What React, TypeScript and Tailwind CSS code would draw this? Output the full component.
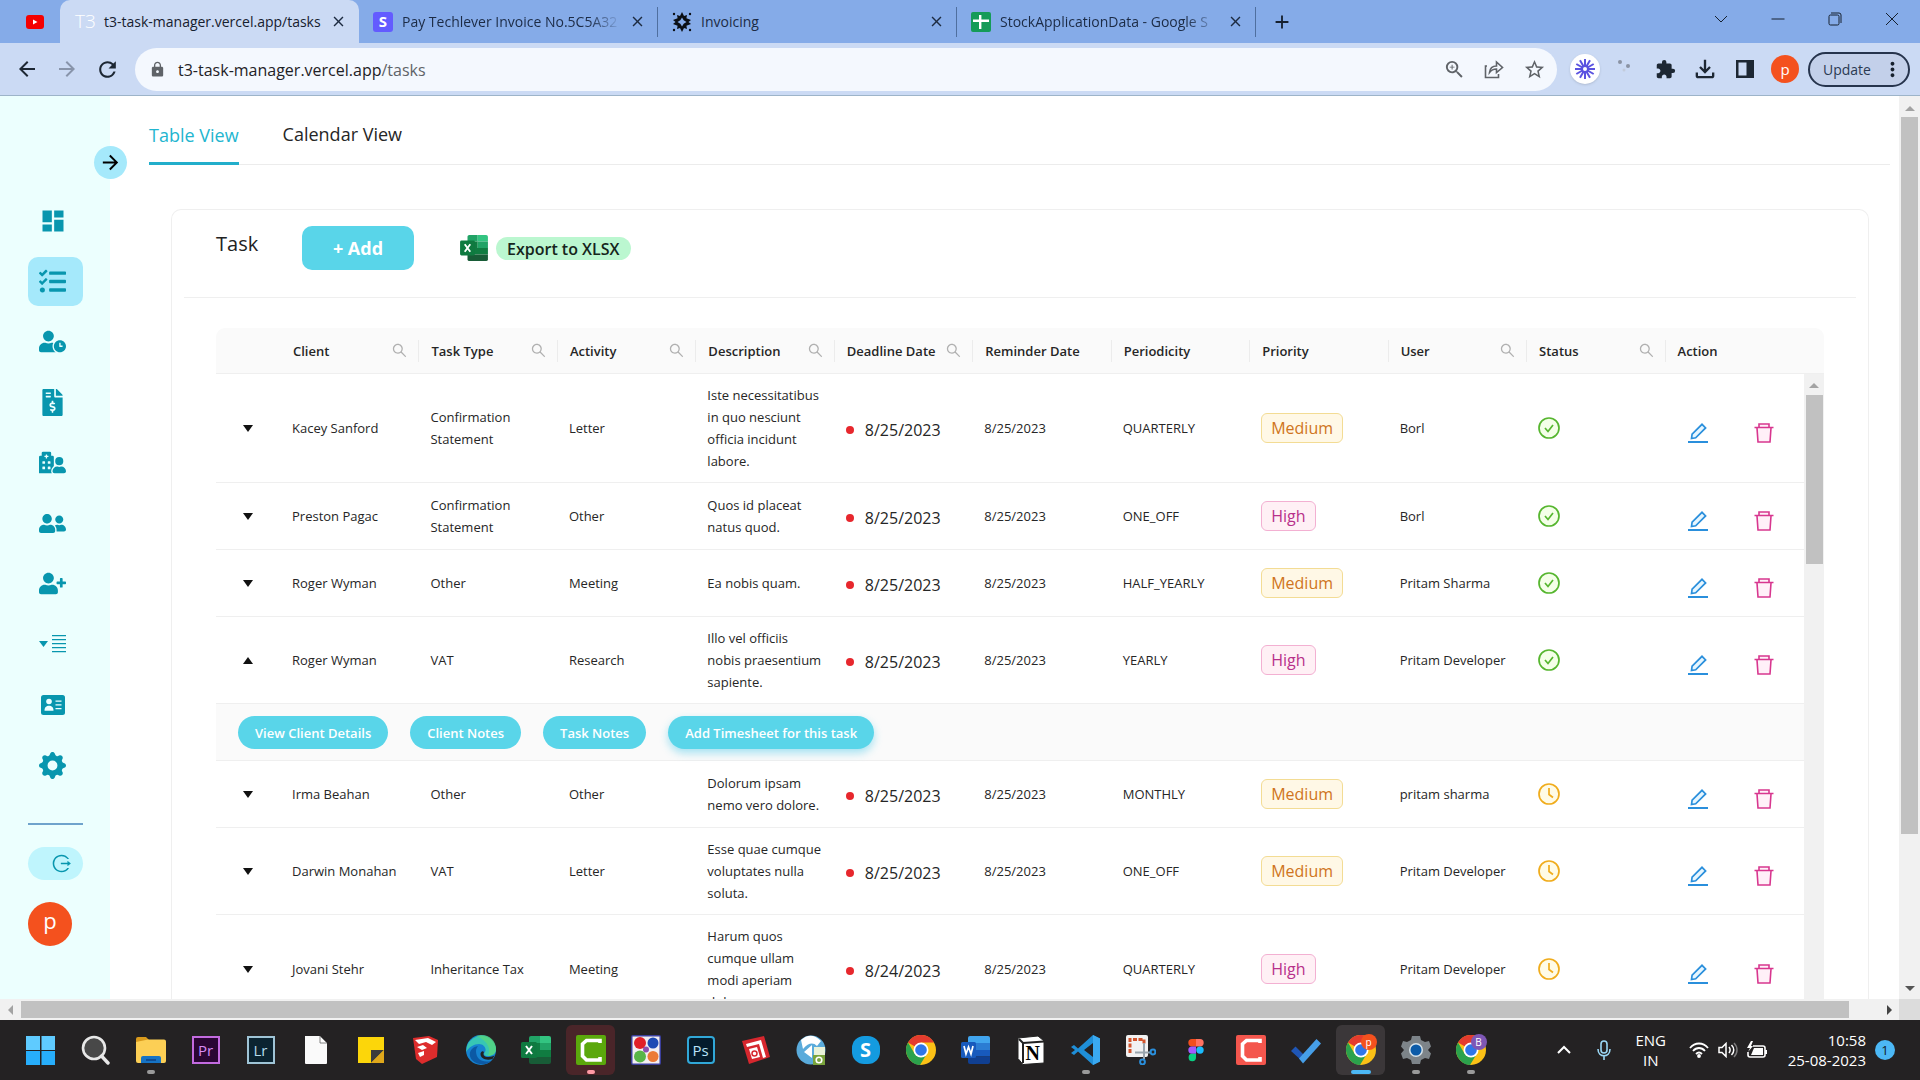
import React from "react";
import { FaFileInvoiceDollar, FaHospitalUser, FaTasks, FaUserClock, FaUserFriends, FaUserPlus } from "react-icons/fa";
import { BsGearFill } from "react-icons/bs";
import { AiOutlineLogout, AiOutlineSearch } from "react-icons/ai";
import {
  MdArrowBack,
  MdArrowForward,
  MdClose,
  MdDashboard,
  MdExtension,
  MdLock,
  MdMoreVert,
  MdOutlineFileDownload,
  MdRefresh,
  MdStarBorder,
  MdZoomIn,
  MdAdd,
} from "react-icons/md";

/* ---------- Browser chrome ---------- */

function SheetsIcon() {
  return (
    <svg viewBox="0 0 20 20" className="size-5 shrink-0">
      <rect width="20" height="20" rx="2" fill="#159b58" />
      <path d="M8 3h2.400v4.500H18v2.400h-7.600V17H8V9.900H2V7.500h6z" fill="#fff" />
    </svg>
  );
}

function InvoicingIcon() {
  return (
    <svg viewBox="0 0 20 20" className="size-5 shrink-0">
      <path
        d="M10 0l2 4 3-1-.6 3.200L19 8l-2.500 2 2.500 2-4.600 1.800.6 3.200-3-1-2 4-2-4-3 1 .6-3.200L1 12l2.500-2L1 8l4.600-1.800L5 3l3 1z"
        fill="#0b0f14"
      />
      <path d="M10 5.500l1.700 2.800 2.800 1.700-2.800 1.700L10 14.500l-1.700-2.800L5.500 10l2.800-1.700z" fill="#85abe8" />
      <g fill="#0b0f14">
        <circle cx="2" cy="2" r="1.200" />
        <circle cx="18" cy="2" r="1.200" />
        <circle cx="2" cy="18" r="1.200" />
        <circle cx="18" cy="18" r="1.200" />
      </g>
    </svg>
  );
}

function BrowserTab({ icon, title, fade }: { icon: React.ReactNode; title: string; fade?: boolean }) {
  return (
    <div className="flex h-[30px] w-[299px] items-center border-r border-[#4f6f9f] pr-[11px] pl-[14px]">
      {icon}
      <span
        className={
          "ml-[9px] flex-1 whitespace-nowrap text-[14px] text-[#1c2b45] " +
          (fade ? "[mask-image:linear-gradient(to_right,#000_85%,transparent)]" : "")
        }
      >
        {title}
      </span>
      <button aria-label={"Close " + title} className="ml-2 text-[#1d2b40]">
        <MdClose className="size-[17px]" />
      </button>
    </div>
  );
}

function TabStrip() {
  return (
    <div className="flex h-[43px] shrink-0 items-center bg-[#85abe8]">
      <button aria-label="YouTube" className="flex w-[60px] justify-center pl-[10px]">
        <svg viewBox="0 0 18 14" className="h-[14px] w-[18px]">
          <rect width="18" height="14" rx="3" fill="#f40000" />
          <path d="M7 4.500v5l4.500-2.500z" fill="#fff" />
        </svg>
      </button>
      <div className="flex h-full w-[299px] items-center rounded-t-[10px] bg-[#cbdaf4] pr-[12px] pl-[15px]">
        <span className="w-[29px] text-[19px] font-light text-white">T3</span>
        <span className="flex-1 whitespace-nowrap text-[14px] text-[#16202e]">t3-task-manager.vercel.app/tasks</span>
        <button aria-label="Close tab" className="text-[#1d2b40]">
          <MdClose className="size-[17px]" />
        </button>
      </div>
      <BrowserTab
        fade
        title="Pay Techlever Invoice No.5C5A32"
        icon={<span className="flex size-5 shrink-0 items-center justify-center rounded-[3px] bg-[#635bff] text-[15px] font-bold text-white">S</span>}
      />
      <BrowserTab title="Invoicing" icon={<InvoicingIcon />} />
      <BrowserTab fade title="StockApplicationData - Google S" icon={<SheetsIcon />} />
      <button aria-label="New tab" className="ml-[15px] text-[#16202e]">
        <MdAdd className="size-[22px]" />
      </button>
      <div className="ml-auto flex h-full items-center pb-[5px] text-[#16202e]">
        {[
          ["Search tabs", "M1 4l6 6 6-6"],
          ["Minimize", "M0.500 7h13"],
          ["Restore", "M1 4.500q0-1.500 1.500-1.500h7q1.500 0 1.500 1.500v7q0 1.500-1.500 1.500h-7q-1.500 0-1.500-1.500zM3 1h8q2 0 2 2v8"],
          ["Close window", "M1 1l12 12M13 1L1 13"],
        ].map(([label, d]) => (
          <button key={label} aria-label={label} className="flex w-[57px] justify-center">
            <svg viewBox="0 0 14 14" className="size-[14px]" fill="none" stroke="currentColor">
              <path d={d} />
            </svg>
          </button>
        ))}
      </div>
    </div>
  );
}

function Toolbar() {
  return (
    <div className="flex h-[53px] shrink-0 items-center border-b border-[#9db4c9] bg-[#cbdaf4] pr-[10px] pl-[7px] text-[#1d2733]">
      <button aria-label="Back" className="flex w-10 justify-center"><MdArrowBack className="size-[24px]" /></button>
      <button aria-label="Forward" className="flex w-10 justify-center text-[#8894aa]"><MdArrowForward className="size-[24px]" /></button>
      <button aria-label="Reload" className="flex w-10 justify-center"><MdRefresh className="size-[25px]" /></button>
      <div className="ml-[8px] flex h-[43px] flex-1 items-center rounded-full bg-[#f4f8fe] pr-[3px] pl-[14px] text-[#5f6368]">
        <MdLock className="size-[17px]" />
        <a href="#tasks" className="ml-[12px] flex-1 pt-px text-[16px]">
          <span className="text-[#1f2226]">t3-task-manager.vercel.app</span>/tasks
        </a>
        <div className="flex items-center">
          <button aria-label="Zoom" className="flex w-10 justify-center"><MdZoomIn className="size-[23px]" /></button>
          <button aria-label="Share" className="flex w-10 justify-center">
            <svg viewBox="0 0 20 20" className="size-5" fill="none" stroke="currentColor" strokeWidth="1.600">
              <path d="M3 7H1.500v11.500h13V15M5.500 13.500C6 9 8.500 7 12.500 7V3l6 5.500-6 5v-3.500c-3 0-5 .8-7 3.500z" />
            </svg>
          </button>
          <button aria-label="Bookmark" className="flex w-10 justify-center"><MdStarBorder className="size-[23px]" /></button>
        </div>
      </div>
      <div className="ml-[8px] flex items-center">
        <button aria-label="Loom" className="mx-[5px] flex size-[30px] items-center justify-center rounded-full bg-white shadow">
          <svg viewBox="0 0 20 20" className="size-5" stroke="#5a52e0" strokeWidth="2">
            {[0, 30, 60, 90, 120, 150].map((a) => (
              <path key={a} d="M10 0v20" transform={`rotate(${a} 10 10)`} />
            ))}
            <circle cx="10" cy="10" r="3" fill="#fff" />
          </svg>
        </button>
        <button aria-label="Extension" className="flex w-10 justify-center">
          <svg viewBox="0 0 20 20" className="size-5">
            <circle cx="5" cy="3" r="2" fill="#8b93a3" />
            <circle cx="13" cy="7" r="2" fill="#8b93a3" />
            <circle cx="9" cy="11" r="1.500" fill="#c2cbdb" />
          </svg>
        </button>
        <button aria-label="Extensions" className="flex w-10 justify-center"><MdExtension className="size-[21px]" /></button>
        <button aria-label="Downloads" className="flex w-10 justify-center"><MdOutlineFileDownload className="size-[28px]" /></button>
        <button aria-label="Side panel" className="flex w-10 justify-center">
          <svg viewBox="0 0 18 18" className="size-[18px]">
            <path d="M0 0h18v18H0zM2.500 2.500v13h8v-13z" fillRule="evenodd" fill="currentColor" />
          </svg>
        </button>
        <button aria-label="Profile" className="mx-[6px] size-7 rounded-full bg-[#f4511e] text-[15px] leading-[24px] text-white">p</button>
        <button className="ml-[3px] flex h-[35px] w-[102px] items-center rounded-full border-2 border-[#26344d] bg-[#c3d0ea] pl-[13px] text-[14px] text-[#2b3a52]">
          Update
          <MdMoreVert className="ml-[10px] size-[23px] text-[#16202e]" />
        </button>
      </div>
    </div>
  );
}

/* ---------- Sidebar ---------- */

function MenuListIcon() {
  return (
    <svg viewBox="0 0 27 18" className="h-[18px] w-[27px]" fill="currentColor">
      <path d="M0 6h9l-4.500 6z" />
      <path d="M13 0h14v1.300H13zM13 4h14v1.300H13zM13 8h14v1.300H13zM13 12h14v1.300H13zM13 16h14v1.300H13z" />
    </svg>
  );
}

function ContactCardIcon() {
  return (
    <svg viewBox="0 0 24 20" className="h-5 w-6">
      <rect width="24" height="20" rx="2.500" fill="currentColor" />
      <g fill="#ecfeff">
        <circle cx="8" cy="6.500" r="2.800" />
        <path d="M3.500 15.800c0-3.600 1.800-5 4.500-5s4.500 1.400 4.500 5z" />
        <path d="M14.500 5.500h6v1.300h-6zM14.500 9.300h6v1.300h-6zM14.500 13h6v1.300h-6z" />
      </g>
    </svg>
  );
}

const navItems = [
  { label: "Dashboard", icon: <MdDashboard className="size-7" /> },
  { label: "Tasks", icon: <FaTasks className="size-[27px]" />, active: true },
  { label: "Timesheet", icon: <FaUserClock className="size-[27px]" /> },
  { label: "Invoices", icon: <FaFileInvoiceDollar className="size-[27px]" /> },
  { label: "Departments", icon: <FaHospitalUser className="size-[27px]" /> },
  { label: "Users", icon: <FaUserFriends className="size-[27px]" /> },
  { label: "Add user", icon: <FaUserPlus className="size-[27px]" /> },
  { label: "Lists", icon: <MenuListIcon /> },
  { label: "Contacts", icon: <ContactCardIcon /> },
  { label: "Settings", icon: <BsGearFill className="size-[27px]" /> },
];

function Sidebar() {
  return (
    <aside className="relative flex w-[110px] shrink-0 flex-col bg-[#ecfffe] pt-[100px] pl-7">
      <button
        aria-label="Expand sidebar"
        className="absolute top-[50px] -right-[17px] z-10 flex size-[33px] items-center justify-center rounded-full bg-[#a5e9fb] text-black"
      >
        <MdArrowForward className="size-[23px]" />
      </button>
      <nav className="flex h-[594px] flex-col justify-between text-[#0896ae]">
        {navItems.map((n) => (
          <a
            key={n.label}
            href="#nav"
            aria-label={n.label}
            className={"flex h-[49px] w-[55px] items-center justify-center rounded-[10px] pr-[6px] " + (n.active ? "bg-[#a5e9fb]" : "")}
          >
            {n.icon}
          </a>
        ))}
      </nav>
      <hr className="mt-[33px] w-[55px] border-t-2 border-[#6fa3cc]" />
      <button aria-label="Log out" className="mt-[22px] flex h-[33px] w-[55px] items-center justify-center rounded-full bg-[#bff5fd] pl-3 text-[#0896ae]">
        <AiOutlineLogout className="size-[21px]" />
      </button>
      <button aria-label="Account" className="mt-[22px] size-11 rounded-full bg-[#f4511e] text-[22px] leading-[36px] text-white">
        <span className="block h-11">p</span>
      </button>
    </aside>
  );
}

/* ---------- Task table ---------- */

type Task = {
  client: string;
  type: string;
  activity: string;
  description: string;
  deadline: string;
  reminder: string;
  periodicity: string;
  priority: "Medium" | "High";
  user: string;
  done: boolean;
  open?: boolean;
};

const columns: { title: string; search?: boolean }[] = [
  { title: "Client", search: true },
  { title: "Task Type", search: true },
  { title: "Activity", search: true },
  { title: "Description", search: true },
  { title: "Deadline Date", search: true },
  { title: "Reminder Date" },
  { title: "Periodicity" },
  { title: "Priority" },
  { title: "User", search: true },
  { title: "Status", search: true },
  { title: "Action" },
];

const tasks: Task[] = [
  { client: "Kacey Sanford", type: "Confirmation Statement", activity: "Letter", description: "Iste necessitatibus in quo nesciunt officia incidunt labore.", deadline: "8/25/2023", reminder: "8/25/2023", periodicity: "QUARTERLY", priority: "Medium", user: "Borl", done: true },
  { client: "Preston Pagac", type: "Confirmation Statement", activity: "Other", description: "Quos id placeat natus quod.", deadline: "8/25/2023", reminder: "8/25/2023", periodicity: "ONE_OFF", priority: "High", user: "Borl", done: true },
  { client: "Roger Wyman", type: "Other", activity: "Meeting", description: "Ea nobis quam.", deadline: "8/25/2023", reminder: "8/25/2023", periodicity: "HALF_YEARLY", priority: "Medium", user: "Pritam Sharma", done: true },
  { client: "Roger Wyman", type: "VAT", activity: "Research", description: "Illo vel officiis nobis praesentium sapiente.", deadline: "8/25/2023", reminder: "8/25/2023", periodicity: "YEARLY", priority: "High", user: "Pritam Developer", done: true, open: true },
  { client: "Irma Beahan", type: "Other", activity: "Other", description: "Dolorum ipsam nemo vero dolore.", deadline: "8/25/2023", reminder: "8/25/2023", periodicity: "MONTHLY", priority: "Medium", user: "pritam sharma", done: false },
  { client: "Darwin Monahan", type: "VAT", activity: "Letter", description: "Esse quae cumque voluptates nulla soluta.", deadline: "8/25/2023", reminder: "8/25/2023", periodicity: "ONE_OFF", priority: "Medium", user: "Pritam Developer", done: false },
  { client: "Jovani Stehr", type: "Inheritance Tax", activity: "Meeting", description: "Harum quos cumque ullam modi aperiam dolor.", deadline: "8/24/2023", reminder: "8/25/2023", periodicity: "QUARTERLY", priority: "High", user: "Pritam Developer", done: false },
];

function Columns() {
  return (
    <colgroup>
      <col className="w-[65px]" />
      {columns.map((c) => (
        <col key={c.title} />
      ))}
    </colgroup>
  );
}

function StatusIcon({ done }: { done: boolean }) {
  return (
    <svg
      viewBox="0 0 22 22"
      role="img"
      aria-label={done ? "Completed" : "Pending"}
      className="size-[22px]"
      strokeWidth="1.700"
      stroke={done ? "#56b62f" : "#f0ac1c"}
      fill={done ? "#f4ffe8" : "#fffbe6"}
    >
      <circle cx="11" cy="11" r="10" />
      <path d={done ? "M7 11l3 3.500 5-6.500" : "M11 5v6.500l4 3"} fill="none" />
    </svg>
  );
}

function EditIcon() {
  return (
    <svg viewBox="0 0 20 20" className="size-5" stroke="#2a8fdc" strokeWidth="1.700">
      <path d="M3.500 15.500l.6-4.300L14 1.300l3.600 3.600-9.900 9.900z" fill="#e6f6ff" />
      <path d="M0 19h20" strokeWidth="2" />
    </svg>
  );
}

function DeleteIcon() {
  return (
    <svg viewBox="0 0 20 20" className="size-5" stroke="#d8378f" strokeWidth="1.600">
      <path d="M3 5l1 14h12l1-14" fill="#fff0f8" />
      <path d="M.5 4.500h19M5 4.500V1h10v3.500" fill="#fff0f8" />
    </svg>
  );
}

const pillButton = "h-[33px] rounded-full bg-[#59d5e9] px-[17px] pt-[2px] text-[13px] font-semibold text-white whitespace-nowrap";
const cell = "h-[67px] border-b border-[#efefef] py-[10px] pl-[11px] pr-[11px]";

function TaskRow({ task }: { task: Task }) {
  return (
    <>
      <tr>
        <td className={cell}>
          <button
            aria-label={task.open ? "Collapse row" : "Expand row"}
            aria-expanded={!!task.open}
            className="flex w-[42px] justify-center text-[#111]"
          >
            <svg viewBox="0 0 10 7" className="h-[7px] w-[10px]" fill="currentColor">
              <path d={task.open ? "M0 7h10L5 0z" : "M0 0h10L5 7z"} />
            </svg>
          </button>
        </td>
        <td className={cell}>{task.client}</td>
        <td className={cell}>{task.type}</td>
        <td className={cell}>{task.activity}</td>
        <td className={cell}>{task.description}</td>
        <td className={cell}>
          <span className="flex items-center pt-1 text-base">
            <span className="mr-[11px] size-2 rounded-full bg-[#e7272d]" />
            {task.deadline}
          </span>
        </td>
        <td className={cell}>{task.reminder}</td>
        <td className={cell}>{task.periodicity}</td>
        <td className={cell}>
          <span
            className={
              "inline-block h-[30px] rounded-md border px-[9px] text-base leading-7 " +
              (task.priority === "High"
                ? "border-[#f3b0d2] bg-[#fff0f5] text-[#b8308b]"
                : "border-[#f3dc94] bg-[#fff8e6] text-[#cf7420]")
            }
          >
            {task.priority}
          </span>
        </td>
        <td className={cell}>{task.user}</td>
        <td className={cell}>
          <StatusIcon done={task.done} />
        </td>
        <td className={cell}>
          <span className="flex gap-[46px] pt-[10px] pl-[11px]">
            <button aria-label={"Edit task of " + task.client}><EditIcon /></button>
            <button aria-label={"Delete task of " + task.client}><DeleteIcon /></button>
          </span>
        </td>
      </tr>
      {task.open && (
        <tr>
          <td colSpan={12} className="h-[57px] border-b border-[#efefef] bg-[#fafafa]">
            <div className="flex gap-[22px] pl-[22px]">
              <button className={pillButton}>View Client Details</button>
              <button className={pillButton}>Client Notes</button>
              <button className={pillButton}>Task Notes</button>
              <button className={pillButton + " shadow-[0_4px_8px_rgba(34,190,230,0.4)]"}>Add Timesheet for this task</button>
            </div>
          </td>
        </tr>
      )}
    </>
  );
}

function TaskTable() {
  return (
    <div className="flex min-h-0 flex-1 flex-col px-[44px] pt-[30px] text-[13px] leading-[22px] text-[#262626]">
      <div className="shrink-0 rounded-t-[9px] border-b border-[#efefef] bg-[#fafafa] pr-5">
        <table className="w-full table-fixed border-separate border-spacing-0">
          <Columns />
          <thead>
            <tr>
              <th aria-label="Expand" />
              {columns.map((c, i) => (
                <th key={c.title} scope="col" className="h-[45px] p-0 text-left font-semibold">
                  <div
                    className={
                      "flex h-[22px] items-center justify-between pr-[10px] pl-3 whitespace-nowrap " +
                      (i < columns.length - 1 ? "border-r border-[#ececec]" : "")
                    }
                  >
                    {c.title}
                    {c.search && (
                      <button aria-label={"Search " + c.title} className="text-[#b0b0b0]">
                        <AiOutlineSearch className="size-[17px]" />
                      </button>
                    )}
                  </div>
                </th>
              ))}
            </tr>
          </thead>
        </table>
      </div>
      <div className="flex min-h-0 flex-1">
        <div className="min-w-0 flex-1 overflow-hidden">
          <table className="w-full table-fixed border-separate border-spacing-0">
            <Columns />
            <tbody>
              {tasks.map((t, i) => (
                <TaskRow key={i} task={t} />
              ))}
            </tbody>
          </table>
        </div>
        <div className="flex w-5 shrink-0 flex-col items-center bg-[#f1f1f1] pt-[9px]">
          <span className="border-x-[5px] border-b-[5px] border-x-transparent border-b-[#a3a3a3]" />
          <span className="mt-[7px] h-[169px] w-[17px] bg-[#c1c1c1]" />
        </div>
      </div>
    </div>
  );
}

function ExcelIcon({ className }: { className: string }) {
  return (
    <svg viewBox="0 0 30 28" className={className}>
      <path d="M8 2q0-2 2-2h9v7H8z" fill="#21a366" />
      <path d="M19 0h9q2 0 2 2v5H19z" fill="#33c481" />
      <path d="M8 7h11v7H8z" fill="#107c41" />
      <path d="M19 7h11v7H19z" fill="#21a366" />
      <path d="M8 14h22v7H8z" fill="#107c41" />
      <path d="M8 21h22v5q0 2-2 2H10q-2 0-2-2z" fill="#185c37" />
      <rect y="6" width="16" height="16" rx="1.500" fill="#0f7a40" />
      <path d="M5 10l6 8M11 10l-6 8" stroke="#fff" strokeWidth="2" />
    </svg>
  );
}

function Content() {
  return (
    <main className="flex min-w-0 flex-1 flex-col overflow-hidden bg-white">
      <div role="tablist" className="mr-[9px] ml-[39px] flex h-[69px] shrink-0 gap-11 border-b border-[#ececec] text-[18px]">
        <button role="tab" aria-selected="true" className="-mb-px border-b-[3px] border-[#22aecb] pt-3 text-[#22b5cf]">
          Table View
        </button>
        <button role="tab" aria-selected="false" className="pt-[9px] text-[#262626]">
          Calendar View
        </button>
      </div>
      <section className="mt-[44px] mr-[30px] ml-[61px] flex min-h-0 flex-1 flex-col rounded-t-[10px] border border-b-0 border-[#efefef]">
        <header className="mx-3 flex h-[88px] shrink-0 items-start border-b border-[#efefef] pt-4 pl-8">
          <h1 className="w-[86px] pt-[2px] text-xl leading-8 text-[#222]">Task</h1>
          <button className="h-11 w-[112px] rounded-[10px] bg-[#59d5e9] text-[18px] font-bold text-white">+ Add</button>
          <button className="mt-[9px] ml-[46px] flex items-center gap-2">
            <ExcelIcon className="h-[26px] w-7" />
            <span className="h-[23px] rounded-full bg-[#bbf7d0] px-[11px] text-base leading-[24px] font-semibold text-[#15251b]">Export to XLSX</span>
          </button>
        </header>
        <TaskTable />
      </section>
    </main>
  );
}

/* ---------- Taskbar ---------- */

function LetterTile({ text, className }: { text: string; className: string }) {
  return <span className={"flex size-7 items-center justify-center border-2 text-[15px] leading-none " + className}>{text}</span>;
}

function ChromeIcon({ badge, badgeClass }: { badge?: string; badgeClass?: string }) {
  return (
    <span className="relative">
      <svg viewBox="0 0 30 30" className="size-[30px]">
        <circle cx="15" cy="15" r="15" fill="#fbc116" />
        <path d="M15 15L2 7.500A15 15 0 0 1 28 7.500H15z" fill="#e33b2e" />
        <path d="M2 7.500A15 15 0 0 0 14 30l7-11.500-12.500 0z" fill="#2ba24c" />
        <circle cx="15" cy="15" r="7.500" fill="#fff" />
        <circle cx="15" cy="15" r="5.800" fill="#2f76e8" />
      </svg>
      {badge && (
        <span className={"absolute -top-px -right-px flex size-4 items-center justify-center rounded-full text-[10px] leading-none text-white " + badgeClass}>
          {badge}
        </span>
      )}
    </span>
  );
}

function Art({ children }: { children: React.ReactNode }) {
  return (
    <svg viewBox="0 0 30 30" className="size-[30px]">
      {children}
    </svg>
  );
}

function CamtasiaIcon({ color }: { color: string }) {
  return (
    <Art>
      <rect width="30" height="30" rx="2" fill={color} />
      <path d="M24 8V5.500H10.500L6.500 9v12l4 4H24V22" fill="none" stroke="#fff" strokeWidth="3.600" />
    </Art>
  );
}

const apps: { label: string; icon: React.ReactNode; mark?: string; tile?: string }[] = [
  {
    label: "Start",
    icon: (
      <Art>
        <path d="M0 1h14v14H0zM15.500 1H29v14H15.500z" fill="#5fcbff" />
        <path d="M0 16h14v14H0zM15.500 16H29v14H15.500z" fill="#27aefb" />
      </Art>
    ),
  },
  {
    label: "Search",
    icon: (
      <Art>
        <circle cx="13" cy="13" r="11" fill="#484848" stroke="#e8e8e8" strokeWidth="2.600" />
        <path d="M20.500 21l6.500 7" stroke="#e8e8e8" strokeWidth="3.400" strokeLinecap="round" />
      </Art>
    ),
  },
  {
    label: "File Explorer",
    mark: "w-2 bg-[#9a9a9a]",
    icon: (
      <Art>
        <path d="M0 4q0-2 2-2h8l3 3v5H0z" fill="#d99a1c" />
        <path d="M0 7l12-2.500h16q2 0 2 2V26q0 2-2 2H2q-2 0-2-2z" fill="#fccf55" />
        <path d="M5 23q0-2 2-2h16q2 0 2 2v5H5z" fill="#1673c4" />
        <path d="M10 25h10" stroke="#0f4d94" strokeWidth="2" />
      </Art>
    ),
  },
  { label: "Premiere Pro", icon: <LetterTile text="Pr" className="border-[#c36be0] bg-[#2a0634] text-[#d78bf5]" /> },
  { label: "Lightroom", icon: <LetterTile text="Lr" className="border-[#9fc4d6] bg-[#0b2431] text-[#b4dcec]" /> },
  {
    label: "Document",
    icon: (
      <Art>
        <path d="M4 1h15l7 7v20q0 1-1 1H5q-1 0-1-1z" fill="#fafafa" />
        <path d="M19 1l7 7h-7z" fill="#fff" stroke="#666" strokeWidth=".8" />
      </Art>
    ),
  },
  {
    label: "Sticky Notes",
    icon: (
      <Art>
        <path d="M2 2h26v26H2z" fill="#fcd60a" />
        <path d="M15 28V15h13z" fill="#3c3c3c" />
        <path d="M15 28l13-13v13z" fill="#e0a81b" />
      </Art>
    ),
  },
  {
    label: "SketchUp",
    icon: (
      <Art>
        <path d="M2 3l16-2 9 4-1 17-15 7-6-5z" fill="#dd2c2c" />
        <path d="M4 5l13-2 8 4-4 3-6-3-7 2zM6 12l6-2 4 3-5 2zM7 18l6-2v4l-4 2z" fill="#fff" />
      </Art>
    ),
  },
  {
    label: "Edge",
    icon: (
      <Art>
        <circle cx="15" cy="15" r="15" fill="#1683d0" />
        <path d="M1 11A15 15 0 0 1 30 14c0 5-4 7-8 7s-5-2-3-4c2-3-1-8-6-8S3 12 0 17z" fill="#37c6b4" />
        <path d="M15 0c9 0 15 6 15 14 0 5-4 7-8 7 3-6 1-15-12-20z" fill="#5bd975" opacity=".7" />
        <path d="M10 16c0 8 6 12 15 10-4 4-13 5-19-1-5-6-1-13 6-14-1 1-2 3-2 5z" fill="#0c59a4" />
        <path d="M18 17c-2 4 2 6 8 4.500l2.500-1-2 3.500c-7 2-12-1-12-5 0-2 2-4 3.500-2z" fill="#222" />
      </Art>
    ),
  },
  { label: "Excel", icon: <ExcelIcon className="h-[28px] w-[30px]" /> },
  { label: "Camtasia", icon: <CamtasiaIcon color="#5ba80c" />, mark: "w-2 bg-[#ff9aa5]", tile: "bg-[#4a2529]" },
  {
    label: "Paint balls",
    icon: (
      <Art>
        <rect width="30" height="30" rx="2" fill="#3b3f9c" />
        <rect x="1.500" y="1.500" width="27" height="27" fill="#f2eef2" />
        <circle cx="9" cy="8" r="6" fill="#e01f28" />
        <circle cx="22" cy="8" r="5.500" fill="#1d49b4" />
        <circle cx="9" cy="21.500" r="6" fill="#58b548" />
        <circle cx="22" cy="21.500" r="5.500" fill="#ec7a36" />
        <circle cx="15" cy="14.500" r="3" fill="#8d4fb0" />
      </Art>
    ),
  },
  { label: "Photoshop", icon: <LetterTile text="Ps" className="rounded-[4px] border-[#31a8d8] bg-[#041c2c] text-[#b9e4fa]" /> },
  {
    label: "Layout",
    icon: (
      <Art>
        <path d="M1 6L23 1l6 21-21 7z" fill="#d6272e" />
        <path d="M5 9l15-4 5 17-3 1-4-14-12 3z" fill="#fff" />
        <path d="M8 14l8-2 3 10-8 2z" fill="#fff" />
        <circle cx="13.500" cy="18.500" r="2.500" fill="none" stroke="#d6272e" strokeWidth="1.500" />
      </Art>
    ),
  },
  {
    label: "BlueStacks",
    icon: (
      <Art>
        <circle cx="15" cy="15" r="14.500" fill="#5aabdb" />
        <path d="M5 5q10-9 20 1l-4 5q-6-6-14 3zM8 17l8-7v13z" fill="#fff" />
        <rect x="18" y="12" width="11" height="9" fill="#e9f2d8" />
        <rect x="17" y="20" width="12" height="10" fill="#7aa43c" />
        <circle cx="23" cy="25" r="2.800" fill="none" stroke="#fff" strokeWidth="1.600" />
      </Art>
    ),
  },
  {
    label: "Skype",
    icon: <span className="flex size-7 items-center justify-center rounded-[12px] bg-[#149be0] text-[20px] leading-none font-bold text-white">S</span>,
  },
  { label: "Chrome", icon: <ChromeIcon /> },
  {
    label: "Word",
    icon: (
      <Art>
        <path d="M7 3q0-2 2-2h18q2 0 2 2v5H7z" fill="#41a5ee" />
        <path d="M7 8h22v7H7z" fill="#2b7cd3" />
        <path d="M7 15h22v6.500H7z" fill="#185abd" />
        <path d="M7 21.500h22V27q0 2-2 2H9q-2 0-2-2z" fill="#103f91" />
        <rect y="7" width="15" height="16" rx="1.500" fill="#185abd" />
        <path d="M3 11l2 8 2.500-7 2.500 7 2-8" fill="none" stroke="#fff" strokeWidth="1.700" />
      </Art>
    ),
  },
  {
    label: "Notion",
    icon: (
      <span className="relative flex">
        <Art>
          <path d="M2 3l20-2 6 5v22l-21 1.500-5-6z" fill="#fff" stroke="#222" />
          <path d="M3 4l4 4v20M7 8l21-1.500" fill="none" stroke="#222" strokeWidth="2" />
        </Art>
        <span className="absolute top-[7px] left-[10px] font-['Liberation_Serif',serif] text-[20px] leading-[22px] font-bold text-black">N</span>
      </span>
    ),
  },
  {
    label: "Visual Studio Code",
    mark: "w-2 bg-[#9a9a9a]",
    icon: (
      <Art>
        <path d="M22 0l7 3.500v23L22 30 7 16.500l-4 3.500-3-2 4-3-4-3 3-2 4 3.500zM22 8l-9 7 9 7z" fillRule="evenodd" fill="#1f8fd8" />
        <path d="M22 0l7 3.500v23L22 30z" fill="#3aa9f0" />
      </Art>
    ),
  },
  {
    label: "Snipping Tool",
    icon: (
      <Art>
        <rect width="22" height="22" rx="2" fill="#f2f2f2" />
        <path d="M4 18V4.500h14V10" fill="none" stroke="#d3552d" strokeWidth="3" strokeDasharray="4 1.500" />
        <path d="M18 8v16M9 17.500h16" stroke="#9aa5ad" strokeWidth="2" />
        <circle cx="27" cy="17" r="2.400" fill="none" stroke="#2a8fdc" strokeWidth="2" />
        <circle cx="16.500" cy="27" r="2.400" fill="none" stroke="#2a8fdc" strokeWidth="2" />
      </Art>
    ),
  },
  {
    label: "Figma",
    icon: (
      <Art>
        <path d="M15 4h-4a3.700 3.700 0 0 0 0 7.400h4z" fill="#f24e1e" />
        <path d="M15 4h4a3.700 3.700 0 0 1 0 7.400h-4z" fill="#ff7262" />
        <path d="M15 11.400h-4a3.700 3.700 0 0 0 0 7.400h4z" fill="#a259ff" />
        <circle cx="19" cy="15.100" r="3.700" fill="#1abcfe" />
        <path d="M15 18.800h-4A3.700 3.700 0 1 0 15 22.500z" fill="#0acf83" />
      </Art>
    ),
  },
  { label: "Camtasia Recorder", icon: <CamtasiaIcon color="#f4564d" /> },
  {
    label: "To Do",
    icon: (
      <Art>
        <path d="M0 16l4.500-4.500 10 10L11 26z" fill="#1f56b5" />
        <path d="M8 23.500L25.500 4 30 8.500 12 28.500z" fill="#469fe8" />
      </Art>
    ),
  },
  {
    label: "Chrome, work profile",
    mark: "w-5 bg-[#4cb8f5]",
    tile: "bg-[#3b3739]",
    icon: <ChromeIcon badge="p" badgeClass="bg-[#f4511e]" />,
  },
  {
    label: "Settings",
    mark: "w-2 bg-[#9a9a9a]",
    icon: (
      <Art>
        <path d="M11 1h8l1 4 4 2 4-1 2 5.500-3 3.500 3 3.500-2 5.500-4-1-4 2-1 4h-8l-1-4-4-2-4 1-2-5.500L3 15 0 11.500 2 6l4 1 4-2z" fill="#7d8489" />
        <circle cx="15" cy="15" r="7" fill="#d7e3ea" />
        <circle cx="15" cy="15" r="5.500" fill="#0c5ba8" />
      </Art>
    ),
  },
  {
    label: "Chrome, second profile",
    mark: "w-2 bg-[#9a9a9a]",
    icon: <ChromeIcon badge="B" badgeClass="bg-[#7e57b5]" />,
  },
];

function Taskbar() {
  return (
    <footer className="flex h-[60px] shrink-0 items-center justify-between bg-[#242223] pr-[25px] pl-[13px] text-white">
      <div className="flex h-full">
        {apps.map((a) => (
          <button key={a.label} aria-label={a.label} className="relative flex w-[55px] items-center justify-center">
            <span className={"flex h-[50px] w-[49px] items-center justify-center rounded-md " + (a.tile ?? "")}>{a.icon}</span>
            {a.mark && <span className={"absolute bottom-[6px] h-1 rounded-full " + a.mark} />}
          </button>
        ))}
      </div>
      <div className="flex items-center text-[15px] leading-5">
        <button aria-label="Show hidden icons" className="w-[14px]">
          <svg viewBox="0 0 14 10" className="w-[14px]" fill="none" stroke="#fff" strokeWidth="2">
            <path d="M1 8l6-6 6 6" />
          </svg>
        </button>
        <button aria-label="Microphone" className="ml-[26px]">
          <svg viewBox="0 0 14 20" className="h-5 w-[14px]" fill="none" stroke="#9ad7f5" strokeWidth="1.600">
            <rect x="4" y="1" width="6" height="12" rx="3" />
            <path d="M1 9c0 9 12 9 12 0M7 16v4" />
          </svg>
        </button>
        <button className="ml-[24px] w-[32px] text-center text-[15px] whitespace-nowrap">
          ENG
          <br />
          IN
        </button>
        <button aria-label="Network, volume and battery" className="ml-[22px] flex items-center gap-[9px]">
          <svg viewBox="0 0 20 16" className="h-4 w-5" fill="none" stroke="#fff" strokeWidth="1.800">
            <path d="M1 6c5-6 13-6 18 0M4 9c3.500-4 8.500-4 12 0M7 12c2-2 4-2 6 0" />
            <circle cx="10" cy="14" r="1" fill="#fff" />
          </svg>
          <svg viewBox="0 0 20 16" className="h-4 w-5" fill="none" stroke="#fff" strokeWidth="1.500">
            <path d="M1 5.500h3l4-4v13l-4-4H1zM11 5c1.500 2 1.500 4 0 6M13.500 3c3 3 3 7 0 10" />
            <path d="M16 1c4 4 4 10 0 14" opacity=".4" />
          </svg>
          <svg viewBox="0 0 20 18" className="h-[18px] w-5" fill="none" stroke="#fff" strokeWidth="1.600">
            <path d="M6 5h10q2 0 2 2v7q0 2-2 2H3q-2 0-2-2v-3M19.300 9v4" />
            <path d="M7 7h9v7H4z" fill="#fff" stroke="none" />
            <path d="M4 0L0 7h3L1 11l5-6H4l2-5z" fill="#fff" stroke="none" />
          </svg>
        </button>
        <button className="ml-[21px] text-right text-[15px] leading-5">
          10:58
          <br />
          25-08-2023
        </button>
        <button aria-label="Notifications" className="ml-[9px] size-5 rounded-full bg-[#4cb8f5] text-[13px] leading-5 text-[#10202c]">
          1
        </button>
      </div>
    </footer>
  );
}

export default function App() {
  return (
    <div className="flex h-screen flex-col overflow-hidden font-['Open_Sans','Noto_Sans',sans-serif]">
      <TabStrip />
      <Toolbar />
      <div className="flex min-h-0 flex-1">
        <Sidebar />
        <Content />
        <div className="flex w-[21px] shrink-0 flex-col items-center bg-[#f1f1f1] pt-[10px] pb-[8px]">
          <span className="border-x-[5px] border-b-[5px] border-x-transparent border-b-[#a3a3a3]" />
          <span className="mt-[6px] h-[81%] w-[17px] bg-[#c1c1c1]" />
          <span className="mt-auto border-x-[5px] border-t-[5px] border-x-transparent border-t-[#555]" />
        </div>
      </div>
      <div className="flex h-[21px] shrink-0 bg-[#dcdcdc]">
        <div className="mr-[21px] flex flex-1 items-center bg-[#f1f1f1] pr-[7px] pl-[8px]">
          <span className="border-y-[5px] border-r-[5px] border-y-transparent border-r-[#a3a3a3]" />
          <span className="mr-[38px] ml-[8px] h-[17px] flex-1 bg-[#c1c1c1]" />
          <span className="border-y-[5px] border-l-[5px] border-y-transparent border-l-[#444]" />
        </div>
      </div>
      <Taskbar />
    </div>
  );
}
